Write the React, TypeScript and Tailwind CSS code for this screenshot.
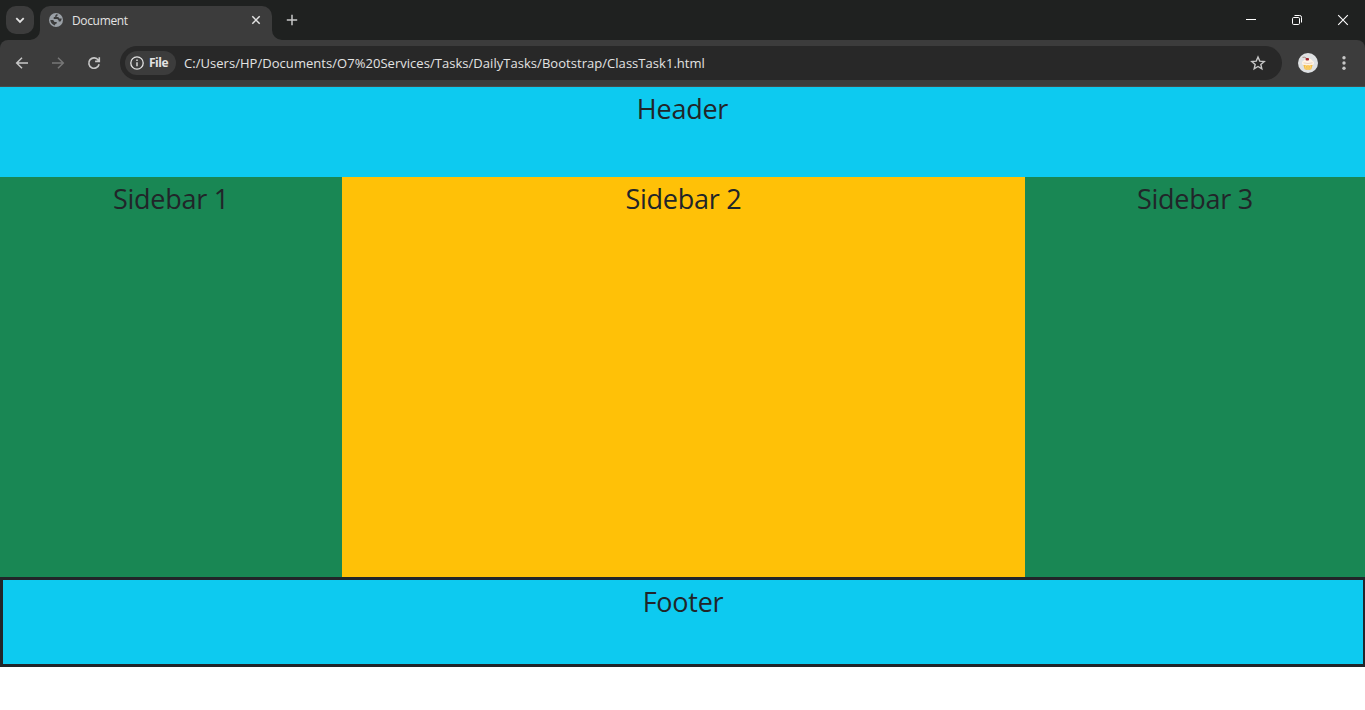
import type { ReactNode } from 'react';

function Globe() {
  return (
    <svg className="size-4" viewBox="0 0 16 16" fill="none">
      <circle cx="8" cy="8" r="7" fill="#9aa0a6" />
      <path d="M8.300 2.300 7.300 3.600v1.200l-1.600.5v1.600h3.600l1.400 1.500v1.200h1.800q1.200-1.300 1.200-3h-2.400l-1-1.600h-1.700V4.300l1.700-1.600ZM2.300 8.100q.3 3.900 4.500 5.500l.6-1.600 1.300-.5v-1.600H6.500L5.200 8.100Z" fill="#3c3c3c" />
    </svg>
  );
}

function Cupcake() {
  return (
    <svg className="size-5" viewBox="0 0 20 20">
      <circle cx="10" cy="10" r="10" fill="#dfe1e3" />
      <path d="M5 10.500h10l-1.700 5.700q-3.300 1-6.600 0Z" fill="#f5bd45" />
      <path d="M7.500 12.500l.6 3.500M10 12.500v4M12.500 12.500l-.6 3.500" stroke="#ffe08a" strokeWidth=".8" />
      <path d="M4 10.800Q3.500 8.500 5.500 7.800 6.500 5.500 10 5.300q3.500.2 4.500 2.500 2 .8 1.500 3-1 1.800-3 .9-1.500 1.200-3 .3-1.500.9-3-.3-2 .9-3-.9Z" fill="#fff4e6" />
      <path d="M5.500 9.800q4.500 1.500 9 0" stroke="#e3c4b0" strokeWidth=".7" fill="none" />
      <path d="M4.500 4.300q2.500-.6 4 1" stroke="#8a6b5c" strokeWidth=".7" fill="none" />
      <rect x="7.600" y="5" width="3.400" height="2.400" rx=".9" fill="#a3262e" />
    </svg>
  );
}

function Panel({ className, children }: { className: string; children: ReactNode }) {
  return <section className={`text-center text-[#212529] ${className}`}>{children}</section>;
}

const heading = "whitespace-nowrap font-['Open_Sans','Noto_Sans',sans-serif] text-[27px] leading-[34px] font-normal tracking-[-0.25px]";

export default function App() {
  return (
    <div className="flex h-[710px] w-full flex-col overflow-hidden bg-white font-['Open_Sans','Noto_Sans',sans-serif]">
      <div className="flex h-10 shrink-0 bg-[#1f2120]">
        <button className="mt-1.5 ml-1.5 flex size-7 items-center justify-center rounded-[10px] bg-[#3c3c3c]">
          <svg className="size-4" viewBox="0 0 16 16" fill="none" stroke="#e3e3e3" strokeWidth="1.8"><path d="m4.300 6.200 3.700 3.700 3.700-3.700" /></svg>
        </button>
        <div className="relative mt-1.5 ml-1.5 flex h-[34px] w-[232px] rounded-t-[10px] bg-[#3c3c3c] pt-1.5 pl-2">
          <svg className="absolute bottom-0 -left-2.5 size-2.5" viewBox="0 0 10 10"><path d="M10 0v10H0A10 10 0 0 0 10 0Z" fill="#3c3c3c" /></svg>
          <svg className="absolute -right-2.5 bottom-0 size-2.5" viewBox="0 0 10 10"><path d="M0 0v10h10A10 10 0 0 1 0 0Z" fill="#3c3c3c" /></svg>
          <Globe />
          <span className="ml-2 h-4 w-[176px] text-[12px] leading-[17px] tracking-[-0.35px] text-[#e3e3e3]">Document</span>
          <svg className="size-4" viewBox="0 0 16 16" stroke="#e3e3e3" strokeWidth="1.500"><path d="m4.300 4.300 7.400 7.400M11.700 4.300l-7.400 7.400" /></svg>
        </div>
        <svg className="mt-3 ml-3 size-4" viewBox="0 0 16 16" stroke="#c7c7c7" strokeWidth="1.500"><path d="M8 2.800v10.400M2.800 8h10.400" /></svg>
        <div className="ml-auto flex">
          <svg className="h-10 w-[46px]" viewBox="0 0 46 40" stroke="white"><path d="M18 19.500h10" /></svg>
          <svg className="h-10 w-[46px]" viewBox="0 0 46 40" stroke="white" fill="none"><rect x="18.500" y="17.500" width="7" height="7" rx="1.200" /><path d="M20.500 15.500h5.200q1.800 0 1.800 1.800v5.200" /></svg>
          <svg className="h-10 w-[45px]" viewBox="0 0 45 40" stroke="white" strokeWidth="1.100"><path d="m18.200 15.200 9.600 9.600M27.800 15.200l-9.600 9.600" /></svg>
        </div>
      </div>

      <div className="h-[47px] shrink-0 bg-[#1f2120]">
        <div className="flex h-[47px] items-center rounded-t-[8px] border-b border-[#4a4a4a] bg-[#3c3c3c]">
          <svg className="ml-3.5 size-4" viewBox="0 0 16 16" fill="none" stroke="#c7c7c7" strokeWidth="1.500"><path d="M14 8H3M8 2.700 2.700 8 8 13.300" /></svg>
          <svg className="ml-5 size-4" viewBox="0 0 16 16" fill="none" stroke="#777777" strokeWidth="1.500"><path d="M2 8h11M8 2.700 13.300 8 8 13.300" /></svg>
          <svg className="ml-5 size-4" viewBox="0 0 16 16" fill="none" stroke="#c7c7c7" strokeWidth="1.600"><path d="M13.100 9.200A5.200 5.200 0 1 1 12.300 5.100L13.300 6.200M13.300 2.200v4.200H9.100" /></svg>
          <div className="ml-[18px] flex h-[34px] w-[1162px] items-center rounded-full bg-[#282828] pr-4 pl-[5px]">
            <div className="flex h-6 w-[51px] items-center rounded-full bg-[#3c3c3c] pl-1">
              <svg className="size-4 shrink-0" viewBox="0 0 16 16" fill="none" stroke="#e3e3e3"><circle cx="8" cy="8" r="6.200" strokeWidth="1.300" /><path d="M8 7.300v4" strokeWidth="1.400" /><path d="M8 4.600v1.400" strokeWidth="1.400" /></svg>
              <span className="ml-1 text-[12px] leading-4 font-bold tracking-[-0.5px] text-[#e3e3e3]">File</span>
            </div>
            <span className="ml-2 whitespace-nowrap text-[13px] leading-5 tracking-[0.04px] text-[#e3e3e3]">C:/Users/HP/Documents/O7%20Services/Tasks/DailyTasks/Bootstrap/ClassTask1.html</span>
            <svg className="ml-auto size-4" viewBox="0 0 16 16" fill="none" stroke="#c7c7c7" strokeWidth="1.400"><path d="m8 2 1.750 4.100 4.450.4-3.370 2.930 1 4.370L8 11.500l-3.830 2.300 1-4.370L1.800 6.500l4.450-.4Z" /></svg>
          </div>
          <div className="ml-4"><Cupcake /></div>
          <svg className="ml-[18px] size-4 shrink-0" viewBox="0 0 16 16" fill="#c7c7c7"><circle cx="8" cy="2.800" r="1.700" /><circle cx="8" cy="8" r="1.700" /><circle cx="8" cy="13.200" r="1.700" /></svg>
        </div>
      </div>

      <Panel className="h-[90px] shrink-0 bg-[#0dcaf0] pt-[5px]"><h3 className={`${heading} tracking-[-0.7px]`}>Header</h3></Panel>
      <div className="flex h-[400px] shrink-0">
        <Panel className="w-[342px] bg-[#198754] pt-[5px]"><h3 className={heading}>Sidebar 1</h3></Panel>
        <Panel className="w-[683px] bg-[#ffc107] pt-[5px]"><h3 className={heading}>Sidebar 2</h3></Panel>
        <Panel className="w-[340px] bg-[#198754] pt-[5px]"><h3 className={heading}>Sidebar 3</h3></Panel>
      </div>
      <Panel className="h-[90px] shrink-0 border-3 border-r-2 border-[#212529] bg-[#0dcaf0] pt-[5px]"><h3 className={heading}>Footer</h3></Panel>
    </div>
  );
}
